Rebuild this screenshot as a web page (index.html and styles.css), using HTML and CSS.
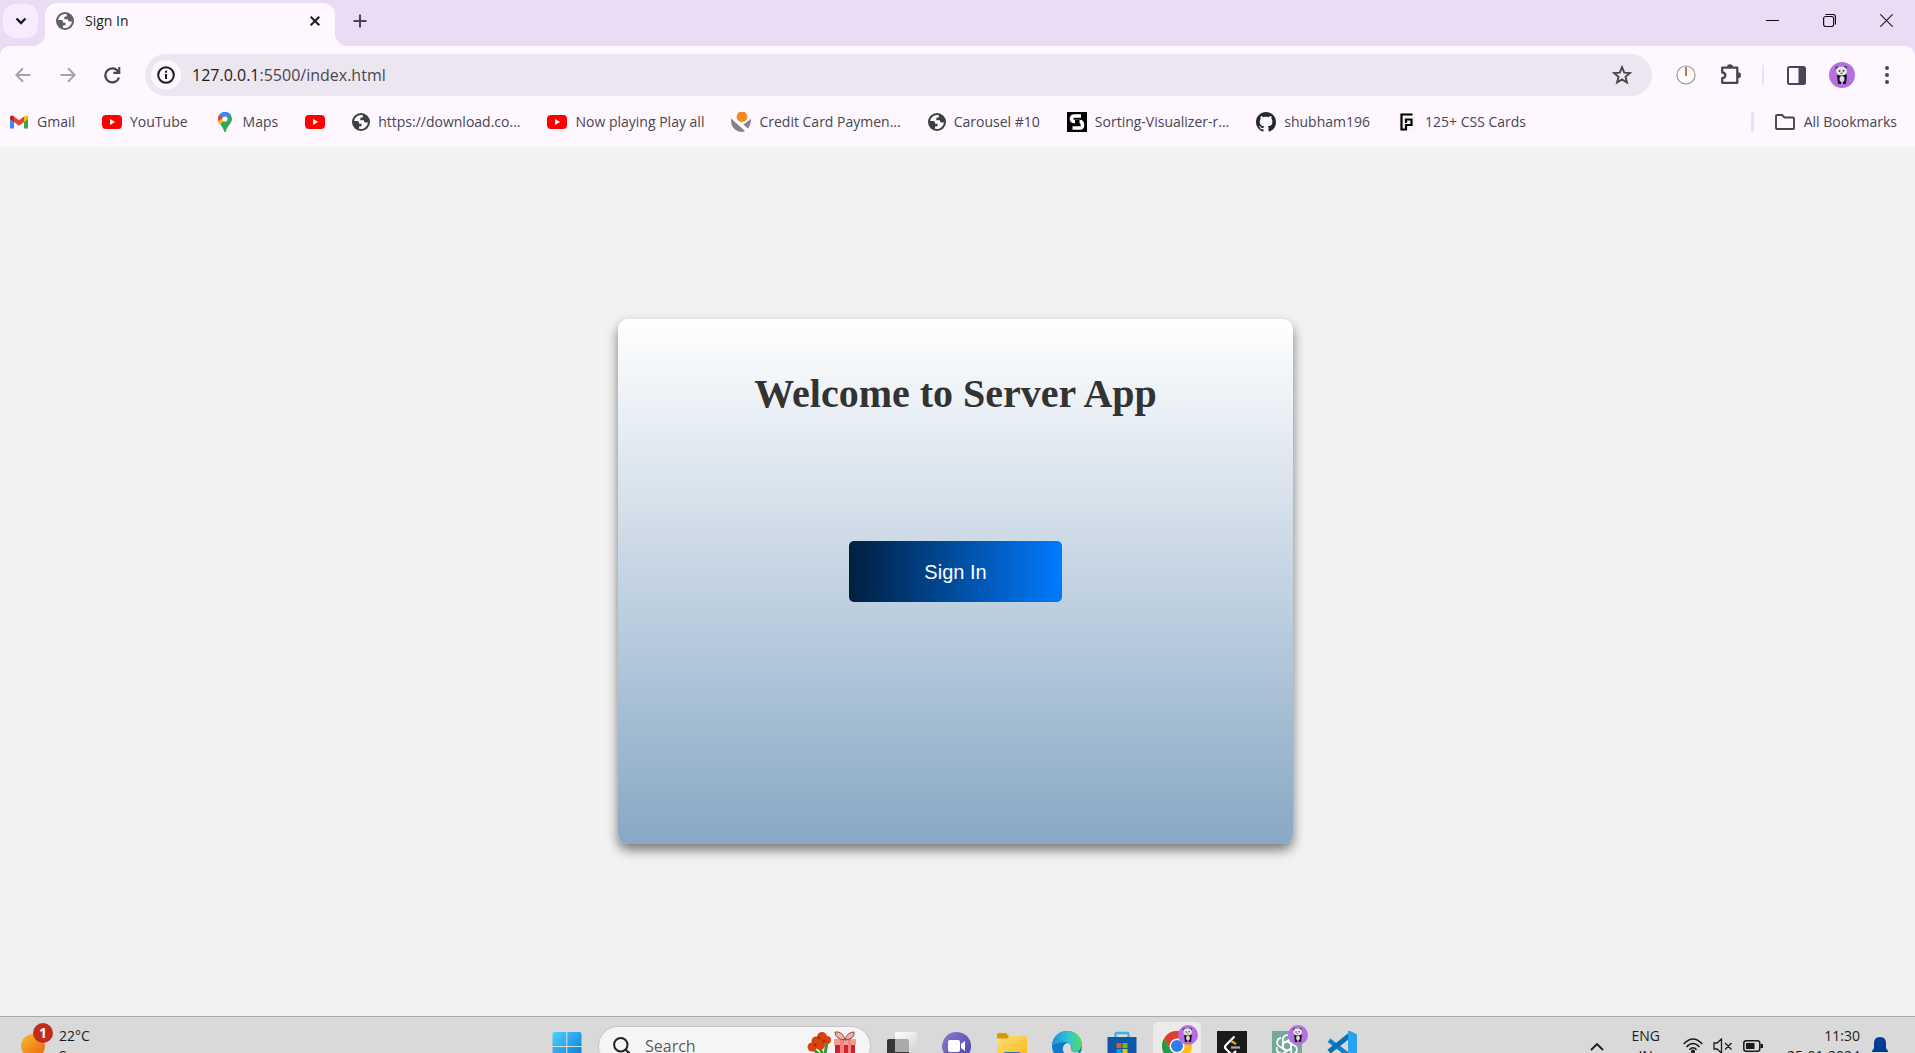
FILE: index.html
```html
<!DOCTYPE html>
<html lang="en">
<head>
<meta charset="utf-8">
<title>Sign In</title>
<link rel="stylesheet" href="styles.css">
</head>
<body>
<svg class="sprite" aria-hidden="true">
  <symbol id="globe" viewBox="0 0 18 18">
    <circle cx="9" cy="9" r="9" fill="currentColor"/>
    <path class="land" d="M9 2A7 7 0 0 0 2.100 8h3.200q1.700 0 1.700 1.500v1.200h2.600v1.600q0 1.200-1.300 1.200H7v2.200A7 7 0 0 0 16 9.500h-2.500q-1.500 0-1.500-1.500V7.300H8.300V5.500q0-1 1-1h1.500V2.200A7 7 0 0 0 9 2Z"/>
  </symbol>
  <symbol id="youtube" viewBox="0 0 20 20">
    <rect y="3" width="20" height="14" rx="4" fill="#f00"/>
    <path d="M8 7v6l5-3z" fill="#fff"/>
  </symbol>
  <symbol id="panda" viewBox="0 0 26 26">
    <circle cx="13" cy="13" r="13" fill="#b56fe0"/>
    <path d="M8 13q5-3 10 0l-1 9h-3v-4h-2v4H9z" fill="#17151a"/>
    <ellipse cx="13" cy="17" rx="2.500" ry="3" fill="#ddd"/>
    <circle cx="8" cy="6" r="1.700" fill="#444"/><circle cx="16.500" cy="5.500" r="1.700" fill="#444"/>
    <ellipse cx="12.500" cy="9" rx="5.500" ry="4.500" fill="#e9e6e6"/>
    <circle cx="10.500" cy="9" r="1" fill="#444"/><circle cx="14.500" cy="8.700" r="1" fill="#444"/>
    <path d="M11.500 11.300h2" stroke="#444"/>
  </symbol>
  <linearGradient id="winG" x1="0" y1="0" x2="1" y2="1"><stop stop-color="#4fd0ff"/><stop offset="1" stop-color="#0078d6"/></linearGradient>
  <linearGradient id="sunG" x1="0" y1="0" x2="1" y2="1"><stop stop-color="#f2bd2c"/><stop offset="1" stop-color="#f0600c"/></linearGradient>
  <linearGradient id="edgeG" x1="0" y1="0" x2="1" y2="0"><stop stop-color="#1a8fdc"/><stop offset=".55" stop-color="#31c6d4"/><stop offset="1" stop-color="#57dc5c"/></linearGradient>
  <linearGradient id="chatG" x1="0" y1="0" x2="1" y2="1"><stop stop-color="#8a7cd0"/><stop offset="1" stop-color="#4a3fb0"/></linearGradient>
  <linearGradient id="folderG" x1="0" y1="0" x2="1" y2="1"><stop stop-color="#ffe07a"/><stop offset="1" stop-color="#f9b916"/></linearGradient>
  <linearGradient id="taskG" x1="0" y1="0" x2="1" y2="1"><stop stop-color="#fff"/><stop offset="1" stop-color="#d4d4d4"/></linearGradient>
</svg>

<div class="browser">
<header class="tabstrip">
  <button class="tab-search" aria-label="Search tabs"><svg width="12" height="8" viewBox="0 0 12 8"><path d="M1.500 1.500 6 6l4.500-4.500" fill="none" stroke="#1d1b20" stroke-width="2.400"/></svg></button>
  <div class="tab">
    <svg class="favicon tab-globe" width="18" height="18"><use href="#globe"/></svg>
    <span class="tab-title">Sign In</span>
    <button class="plain" aria-label="Close tab"><svg width="10" height="10" viewBox="0 0 10 10"><path d="M.7.700 9.300 9.300M9.300.700.700 9.300" stroke="#1d1b20" stroke-width="2"/></svg></button>
  </div>
  <button class="plain new-tab" aria-label="New tab"><svg width="14" height="14" viewBox="0 0 14 14"><path d="M7 .5v13M.5 7h13" stroke="#4a4458" stroke-width="2"/></svg></button>
  <div class="window-controls">
    <button aria-label="Minimize"><svg width="13" height="13"><path d="M0 6.500h13" stroke="#111"/></svg></button>
    <button aria-label="Restore"><svg width="13" height="13" viewBox="0 0 13 13"><path d="M2.500.500H10A2.500 2.500 0 0 1 12.500 3v7.500" fill="none" stroke="#111" stroke-width="1.200"/><rect x=".6" y="2.500" width="10" height="10" rx="2" fill="none" stroke="#111" stroke-width="1.200"/></svg></button>
    <button aria-label="Close"><svg width="13" height="13"><path d="m.3.300 12.400 12.400M12.700.300.300 12.700" stroke="#222" stroke-width="1.200"/></svg></button>
  </div>
</header>

<div class="bars">
<nav class="toolbar" aria-label="Navigation">
  <button class="tool" aria-label="Back"><svg width="16" height="16" viewBox="0 0 16 16"><path d="M15.500 8H1.500M8 1.300 1.300 8 8 14.700" fill="none" stroke="#a8a1ad" stroke-width="2"/></svg></button>
  <button class="tool" aria-label="Forward"><svg width="16" height="16" viewBox="0 0 16 16"><path d="M.5 8h14M8 1.300 14.700 8 8 14.700" fill="none" stroke="#a8a1ad" stroke-width="2"/></svg></button>
  <button class="tool" aria-label="Reload"><svg width="17" height="17" viewBox="0 0 17 17"><path d="M15 10.500A7 7 0 1 1 14 4.300L15.500 6" fill="none" stroke="#4a4458" stroke-width="2.300"/><path d="M16.300 0v7h-7V4.800h4.900V0z" fill="#4a4458"/></svg></button>
  <div class="omnibox">
    <button class="site-info" aria-label="Site information"><svg width="18" height="18" viewBox="0 0 18 18"><circle cx="9" cy="9" r="7.800" fill="none" stroke="#1d1b20" stroke-width="2"/><path d="M8 8h2v5H8zM8 4.800h2v2H8z" fill="#1d1b20"/></svg></button>
    <div class="url">127.0.0.1<span class="path">:5500/index.html</span></div>
    <button class="plain" aria-label="Bookmark this page"><svg width="20" height="20" viewBox="0 0 20 20"><path d="m10 2.200 2.200 5.400 5.800.400-4.500 3.800 1.400 5.700-4.900-3.100-4.900 3.100 1.400-5.700L2 8l5.800-.4z" fill="none" stroke="#49454e" stroke-width="1.900"/></svg></button>
  </div>
  <button class="tool" aria-label="Timer"><svg width="20" height="20" viewBox="0 0 20 20"><circle cx="10" cy="10" r="9" fill="#fffdf9" stroke="#99969c" stroke-width="1.200"/><path d="M10 2v9" stroke="#b5302f" stroke-width="1.400"/></svg></button>
  <button class="tool" aria-label="Extensions"><svg width="22" height="22" viewBox="0 0 22 22"><path d="M2.200 3.700h15.100v15.100H2.200v-4.600c4.200-.3 4.200-5.400 0-5.700z" fill="none" stroke="#4a4458" stroke-width="2.300" stroke-linejoin="round"/><path d="M7 3a3 2.700 0 0 1 6 0zM18 8.300a3 3 0 0 1 0 6z" fill="#4a4458"/></svg></button>
  <span class="divider"></span>
  <button class="tool" aria-label="Side panel"><svg width="19" height="19" viewBox="0 0 19 19"><rect x="1" y="1" width="17" height="17" rx="1.500" fill="none" stroke="#4a4458" stroke-width="2"/><path d="M11.500 1H18v17h-6.500z" fill="#4a4458"/></svg></button>
  <button class="tool" aria-label="Profile"><svg width="26" height="26"><use href="#panda"/></svg></button>
  <button class="tool" aria-label="Menu"><svg width="4" height="18" viewBox="0 0 4 18"><g fill="#4a4458"><circle cx="2" cy="2" r="2"/><circle cx="2" cy="9" r="2"/><circle cx="2" cy="16" r="2"/></g></svg></button>
</nav>

<nav class="bookmarks" aria-label="Bookmarks">
  <a href="#"><svg width="20" height="20" viewBox="0 0 20 20"><path d="M1 5v11.500h4V9z" fill="#4285f4"/><path d="M15 9v7.500h4V5z" fill="#34a853"/><path d="M15 4.500V10l4-3V5q-.3-2-2.200-1.500z" fill="#fbbc04"/><path d="M5 4.500V10L1 7V5q.3-2 2.200-1.500z" fill="#c5221f"/><path d="M5 4.500V10l5 3.700L15 10V4.500l-5 3.800z" fill="#ea4335"/></svg>Gmail</a>
  <a href="#"><svg width="20" height="20"><use href="#youtube"/></svg>YouTube</a>
  <a href="#"><svg width="20" height="20" viewBox="0 0 20 20"><path d="M10 0a7 7 0 0 1 7 7c0 4.500-5.500 7.500-6 12.200q-1 1.500-2 0C8.500 14.500 3 11.500 3 7a7 7 0 0 1 7-7" fill="#34a853"/><path d="M3 7a7 7 0 0 0 2.400 5.500L10 7 4.600 2.500A7 7 0 0 0 3 7" fill="#fbbc04"/><path d="M4.600 2.500A7 7 0 0 0 3.400 9.300L8 6z" fill="#ea4335"/><path d="M4.600 2.500A7 7 0 0 1 16 3.300L10 9z" fill="#4285f4"/><circle cx="10" cy="7" r="2.600" fill="#fff"/></svg>Maps</a>
  <a href="#" aria-label="YouTube home"><svg width="20" height="20"><use href="#youtube"/></svg></a>
  <a href="#"><svg class="favicon" width="18" height="18"><use href="#globe"/></svg>https://download.co...</a>
  <a href="#"><svg width="20" height="20"><use href="#youtube"/></svg>Now playing Play all</a>
  <a href="#"><svg width="20" height="20" viewBox="0 0 20 20"><path d="M0 6.500q-.5 7 4 11Q9 21.500 14 19zM20 7q0 6-3.500 10l-4-4.500z" fill="#85827f"/><path d="M2 5 17.500 18.500" stroke="#fff" stroke-width="2"/><circle cx="11" cy="4.700" r="5.400" fill="#f58a1f"/></svg>Credit Card Paymen...</a>
  <a href="#"><svg class="favicon" width="18" height="18"><use href="#globe"/></svg>Carousel #10</a>
  <a href="#"><svg width="20" height="20" viewBox="0 0 20 20"><path d="M0 0h20v20H0z" fill="#000"/><path d="M14 4H7.500Q4.500 4 4.500 6.700T7.500 9.500h5q3 0 3 3.500t-3 3H5.500" fill="none" stroke="#fff" stroke-width="3.600"/><path d="M8 8h4.500v4.500H8z" fill="#000"/></svg>Sorting-Visualizer-r...</a>
  <a href="#"><svg width="20" height="20" viewBox="0 0 16 16"><path fill="#24292f" d="M8 0C3.580 0 0 3.580 0 8c0 3.540 2.290 6.530 5.470 7.590.4.070.55-.17.55-.38 0-.19-.01-.82-.01-1.490-2.010.37-2.530-.49-2.690-.94-.09-.23-.48-.94-.82-1.130-.28-.15-.68-.52-.01-.53.63-.01 1.080.58 1.230.82.720 1.210 1.870.870 2.330.66.070-.52.280-.87.510-1.070-1.780-.2-3.640-.89-3.640-3.950 0-.87.310-1.590.820-2.150-.08-.2-.36-1.020.08-2.120 0 0 .67-.21 2.200.82.640-.18 1.320-.27 2-.27s1.360.09 2 .27c1.530-1.040 2.200-.82 2.200-.82.440 1.100.16 1.920.08 2.120.51.560.82 1.270.82 2.150 0 3.070-1.870 3.750-3.650 3.950.29.250.54.730.54 1.480 0 1.070-.01 1.930-.01 2.200 0 .21.150.46.550.38A8.010 8.010 0 0 0 16 8c0-4.420-3.580-8-8-8"/></svg>shubham196</a>
  <a href="#"><svg width="20" height="20" viewBox="0 0 20 20"><path d="M2 1h16v18H2z" fill="#f4f4f2"/><path d="M15.500 2.500H4.500v15h4.500V13h5.500V7.500H9V11" fill="none" stroke="#000" stroke-width="2.200"/></svg>125+ CSS Cards</a>
  <span class="bookmark-divider"></span>
  <a class="all-bookmarks" href="#"><svg width="22" height="20" viewBox="0 0 22 20"><path d="M2 4q0-1 1-1h5l2.500 2.500H19q1 0 1 1V16q0 1-1 1H3q-1 0-1-1z" fill="none" stroke="#49454e" stroke-width="1.900"/></svg>All Bookmarks</a>
</nav>
</div>
</div>

<main class="page">
  <section class="card">
    <h1>Welcome to Server App</h1>
    <button class="sign-in">Sign In</button>
  </section>
</main>

<footer class="taskbar">
  <div class="weather">
    <div class="sun"><svg width="24" height="24"><circle cx="12" cy="12" r="12" fill="url(#sunG)"/></svg><span class="badge">1</span></div>
    <div class="two-lines"><span>22°C</span><span>Sunny</span></div>
  </div>
  <div class="apps">
    <button class="app" aria-label="Start"><svg width="30" height="30" viewBox="0 0 30 30"><path d="M.5 3q0-2 2-2h11.700v14H.500zM15.300 1h12.200q2 0 2 2v12H15.300zM.5 16h13.700v13H2.500q-2 0-2-2zM15.300 16h14.200v11q0 2-2 2H15.300z" fill="url(#winG)"/></svg></button>
    <label class="search">
      <svg width="18" height="18" viewBox="0 0 18 18"><circle cx="7.800" cy="7.800" r="6.700" fill="none" stroke="#222" stroke-width="2"/><path d="m12.500 12.500 5 5" stroke="#222" stroke-width="2.200"/></svg>
      <input type="text" placeholder="Search" aria-label="Search">
      <svg width="50" height="30" viewBox="0 0 50 30"><path d="M5 17 16 27M12 14l5 14M20 12l-3 16" stroke="#3e9a2c" stroke-width="3"/><g fill="#d8420f"><circle cx="15" cy="6" r="5"/><circle cx="9" cy="10" r="4.500"/><circle cx="20" cy="9" r="4"/><circle cx="5" cy="16" r="4.500"/><circle cx="13" cy="14" r="5"/></g><g fill="#a82a06"><circle cx="12" cy="7" r="1.500"/><circle cx="17" cy="10" r="1.500"/><circle cx="8" cy="14" r="1.500"/></g><path d="M27 8h22v6H27z" fill="#f2a097"/><path d="M28 14h20v16H28z" fill="#c9252c"/><path d="M33 8h4v22h-4zM41 8h3v22h-3z" fill="#f0857f"/><path d="M38 9Q28 8 28 1q8-1 10 8M38 9q10-1 9-8-7 0-9 8" fill="#f5b1a4" stroke="#8f4b42" stroke-width="1"/></svg>
    </label>
    <button class="app" aria-label="Task view"><svg width="30" height="30" viewBox="0 0 30 30"><rect y="8" width="22" height="22" rx="2" fill="#363636"/><rect x="8" y="1" width="22" height="20" rx="1.500" fill="url(#taskG)"/><path d="M8 8h12.500q1.500 0 1.500 1.500V21H8z" fill="#aaa"/></svg></button>
    <button class="app" aria-label="Chat"><svg width="30" height="30" viewBox="0 0 30 30"><path d="M15 1a14.200 14.200 0 1 1-8 26l-6 2 1.500-6A14.200 14.200 0 0 1 15 1" fill="url(#chatG)"/><rect x="6" y="9" width="12" height="12" rx="2" fill="#fff"/><path d="m19 13 4-3v10l-4-3z" fill="#fff"/></svg></button>
    <button class="app" aria-label="File Explorer"><svg width="30" height="30" viewBox="0 0 30 30"><path d="M0 4q0-2 2-2h7l3 3.500V9H0z" fill="#d59a06"/><path d="M0 7.500h10L13 5h15q2 0 2 2v19H0z" fill="url(#folderG)"/><path d="M6 24q0-3 3-3h12q3 0 3 3v3H6z" fill="#1173c4"/></svg></button>
    <button class="app" aria-label="Edge"><svg width="30" height="30" viewBox="0 0 30 30"><circle cx="15" cy="15" r="15" fill="#1179cb"/><path d="M0 14C1 5 8 0 15 0c9 0 15 6 15 13 0 5-4 8-8 8-3 0-4-1.500-3-3 1.500-3-1-7-6-7-6 0-11 3-13 3" fill="url(#edgeG)"/><path d="M11 20q-1-6 4-8 4 0 4 5-1 3 2 4 3 .800 6-1-3 7-9 5-5-1-7-5" fill="#dcdcdc"/></svg></button>
    <button class="app" aria-label="Microsoft Store"><svg width="30" height="30" viewBox="0 0 30 30"><path d="M8.500 6V3q0-1 1-1h11q1 0 1 1v3" fill="none" stroke="#34b5ea" stroke-width="2.300"/><path d="M.5 6h29v19q0 4-4 4h-21q-4 0-4-4z" fill="#0d58a6"/><path d="M9.500 12h5v5h-5z" fill="#f25022"/><path d="M15.500 12h5v5h-5z" fill="#7fba00"/><path d="M9.500 18h5v5h-5z" fill="#00a4ef"/><path d="M15.500 18h5v5h-5z" fill="#ffb900"/></svg></button>
    <button class="app active" aria-label="Chrome"><svg width="30" height="30" viewBox="0 0 30 30"><circle cx="15" cy="15" r="15" fill="#fbc116"/><path d="M15 15 8.500 18.800 2 7.500a15 15 0 0 1 26 0H15z" fill="#e33b2e"/><path d="m2 7.500 6.500 11.300L15 22.500l-1 7.500A15 15 0 0 1 2 7.500" fill="#229a4a"/><circle cx="15" cy="15" r="7.500" fill="#fff"/><circle cx="15" cy="15" r="6" fill="#2f7de9"/></svg><svg class="app-badge" width="20" height="20"><use href="#panda"/></svg></button>
    <button class="app" aria-label="LeetCode"><svg width="30" height="30" viewBox="0 0 30 30"><path d="M0 0h30v30H0z" fill="#1b1b1b"/><path d="M17.500 5.500 9 14q-2 2 0 4l4 4q2 2 4 0l2-2" fill="none" stroke="#fff" stroke-width="2.200"/><path d="m14 10 5 3" stroke="#f89f1b" stroke-width="2.200"/><path d="M14 16.500h9" stroke="#aaa" stroke-width="2.200"/></svg></button>
    <button class="app" aria-label="ChatGPT"><svg width="30" height="30" viewBox="0 0 30 30"><path d="M0 0h30v30H0z" fill="#74aa9c"/><g fill="none" stroke="#fff" stroke-width="1.700"><path id="petal" d="M10.800 16.500V8.500A4.600 4.600 0 0 1 19 5.800M10.800 12.500 15 10.200l6 3.500"/><use href="#petal" transform="rotate(60 15 15)"/><use href="#petal" transform="rotate(120 15 15)"/><use href="#petal" transform="rotate(180 15 15)"/><use href="#petal" transform="rotate(240 15 15)"/><use href="#petal" transform="rotate(300 15 15)"/></g></svg><svg class="app-badge" width="20" height="20"><use href="#panda"/></svg></button>
    <button class="app" aria-label="Visual Studio Code"><svg width="30" height="30" viewBox="0 0 30 30"><path d="m2 9.300 20 15.200" stroke="#0f7fc9" stroke-width="4.500"/><path d="M2 20.700 23 4" stroke="#0a70b8" stroke-width="5"/><path d="M21 0q1-.5 2 0l6 2.700q1 .500 1 1.500v21.600q0 1-1 1.500L23 30q-1 .500-2 0z" fill="#27a3f0"/></svg></button>
  </div>
  <div class="tray">
    <svg width="14" height="9" viewBox="0 0 14 9"><path d="m1 8 6-6 6 6" fill="none" stroke="#1b1b1b" stroke-width="1.800"/></svg>
    <div class="two-lines language"><span>ENG</span><span>IN</span></div>
    <div class="status">
      <svg width="20" height="16" viewBox="0 0 20 16"><g fill="none" stroke="#1b1b1b" stroke-width="1.500"><path d="M.7 6q9.300-10 18.600 0M3.500 9q6.500-7 13 0M6.400 11.700q3.600-4 7.200 0"/></g><circle cx="10" cy="13.500" r="2" fill="#1b1b1b"/></svg>
      <svg width="20" height="16" viewBox="0 0 20 16"><path d="M1 5h3l4.500-4v14L4 11H1zM12 5l6.500 6.500M18.500 5 12 11.500" fill="none" stroke="#1b1b1b" stroke-width="1.300"/></svg>
      <svg width="20" height="12" viewBox="0 0 20 12"><rect x=".8" y=".8" width="16" height="10.400" rx="2.500" fill="none" stroke="#1b1b1b" stroke-width="1.500"/><path d="M3 3h8.500v6H3zM17.500 4H20v4h-2.500z" fill="#1b1b1b"/></svg>
    </div>
    <div class="two-lines clock"><span>11:30</span><span>25-01-2024</span></div>
    <svg width="16" height="19" viewBox="0 0 16 19"><path d="M8 0q6 0 6 6v5l2 3v1H0v-1l2-3V6q0-6 6-6M5.500 16h5q-2.500 4-5 0" fill="#003c95"/></svg>
  </div>
</footer>
</body>
</html>
```
FILE: styles.css
```css
* { box-sizing: border-box; }

body {
  margin: 0;
  height: 100vh;
  display: flex;
  flex-direction: column;
  overflow: hidden;
  background: #f2f2f2;
  color: #1d1b20;
  font: 14px/20px "Segoe UI", "Open Sans", "Noto Sans", sans-serif;
}

button {
  border: 0;
  padding: 0;
  background: none;
  font: inherit;
  color: inherit;
}

svg { display: block; flex: none; }

.sprite { position: absolute; width: 0; height: 0; }

.browser { background: #e8ddf5; }

/* Tab strip */
.tabstrip {
  display: flex;
  height: 46px;
  padding-left: 3px;
}

.tab-search {
  display: grid;
  place-items: center;
  width: 35px;
  height: 34px;
  margin: 4px 7px 0 0;
  border-radius: 12px;
  background: #f7ebfe;
}

.tab {
  position: relative;
  display: flex;
  align-items: center;
  gap: 11px;
  width: 290px;
  margin-top: 3px;
  padding: 0 15px 7px 11px;
  border-radius: 12px 12px 0 0;
  background: #fef7ff;
}

.tab::before,
.tab::after {
  content: "";
  position: absolute;
  bottom: 0;
  width: 14px;
  height: 14px;
}

.tab::before {
  right: 100%;
  background: radial-gradient(circle at 0 0, transparent 14px, #fef7ff 15px);
}

.tab::after {
  left: 100%;
  background: radial-gradient(circle at 100% 0, transparent 14px, #fef7ff 15px);
}

.tab-title { flex: 1; }

.favicon { color: #3c4043; }
.tab-globe { color: #5f6368; }
.land { fill: #fef7ff; }

.plain { display: grid; place-items: center; }
.new-tab { width: 34px; height: 34px; margin: 4px 0 0 8px; }

.window-controls { display: flex; margin-left: auto; }

.window-controls button {
  display: grid;
  place-items: center;
  width: 57px;
  height: 41px;
}

/* Toolbar */
.bars {
  border-radius: 10px 10px 0 0;
  background: #fef7ff;
}

.toolbar {
  display: flex;
  align-items: center;
  height: 58px;
  padding-right: 6px;
}

.tool {
  display: grid;
  place-items: center;
  width: 45px;
  height: 42px;
}

.omnibox {
  flex: 1;
  display: flex;
  align-items: center;
  gap: 11px;
  height: 42px;
  margin: 0 11px 0 10px;
  padding: 0 20px 0 6px;
  border-radius: 21px;
  background: #ece6f0;
}

.site-info {
  display: grid;
  place-items: center;
  width: 30px;
  height: 30px;
  border-radius: 50%;
  background: #fef7ff;
}

.url { flex: 1; font-size: 16px; }
.path { color: #49454e; }

.divider {
  width: 2px;
  height: 20px;
  margin: 0 10px 0 9px;
  background: #eaddff;
}

/* Bookmarks bar */
.bookmarks {
  display: flex;
  align-items: center;
  gap: 27px;
  height: 43px;
  padding: 0 18px 7px 9px;
}

.bookmarks a {
  display: flex;
  align-items: center;
  gap: 8px;
  color: #49454e;
  text-decoration: none;
  white-space: nowrap;
}

.bookmark-divider {
  width: 3px;
  height: 20px;
  margin-left: auto;
  border-radius: 2px;
  background: #eaddff;
}

.bookmarks .all-bookmarks { margin-left: -7px; }

/* Page */
.page {
  flex: 1;
  display: grid;
  place-items: center;
  padding-right: 4px;
}

.card {
  display: flex;
  flex-direction: column;
  align-items: center;
  width: 675px;
  min-height: 525px;
  padding: 52px;
  border-radius: 10px;
  background: linear-gradient(#fff, #88a8c5);
  box-shadow: 0 6px 12px rgba(0, 0, 0, .5);
}

h1 {
  margin: 0 0 124px;
  color: #333;
  font: bold 40px/46px "Liberation Serif", "Times New Roman", serif;
}

.sign-in {
  width: 213px;
  height: 61px;
  border-radius: 5px;
  background: linear-gradient(to right, #001f3f, #007bff);
  color: #fff;
  font: 20px/24px "Liberation Sans", Arial, sans-serif;
}

/* Taskbar: the bar continues below the window edge */
.taskbar {
  flex: 0 0 37px;
  display: grid;
  grid-template-columns: 1fr auto 1fr;
  grid-template-rows: 58px;
  padding: 0 27px 0 21px;
  border-top: 1px solid #a9a9a9;
  background: #d9d9d9;
  overflow: hidden;
}

.weather, .apps, .tray { display: flex; align-items: center; }
.weather { gap: 14px; }
.sun { position: relative; }

.badge {
  position: absolute;
  left: 12px;
  top: -11px;
  width: 20px;
  height: 20px;
  border-radius: 50%;
  background: #c42b1c;
  color: #fff;
  font-weight: bold;
  text-align: center;
}

.two-lines { display: grid; }

.apps { gap: 7px; }

.app {
  position: relative;
  display: grid;
  place-items: center;
  width: 48px;
  height: 48px;
  border-radius: 5px;
}

.active { background: #ebebeb; }

.app-badge { position: absolute; top: 3px; right: 3px; }

.search {
  display: flex;
  align-items: center;
  width: 273px;
  height: 40px;
  padding: 0 13px 0 14px;
  gap: 14px;
  border: 1px solid #c4c4c4;
  border-radius: 20px;
  background: #f5f5f5;
}

.search input {
  flex: 1;
  min-width: 0;
  padding: 0;
  border: 0;
  background: none;
  font: 16px/24px "Segoe UI", "Open Sans", "Noto Sans", sans-serif;
}

.search input::placeholder { color: #5c5c5c; opacity: 1; }

.tray { justify-content: flex-end; }
.language { margin: 0 23px 0 27px; text-align: center; }
.status { display: flex; align-items: center; gap: 10px; margin-right: 24px; }
.clock { margin-right: 12px; text-align: right; }
```
